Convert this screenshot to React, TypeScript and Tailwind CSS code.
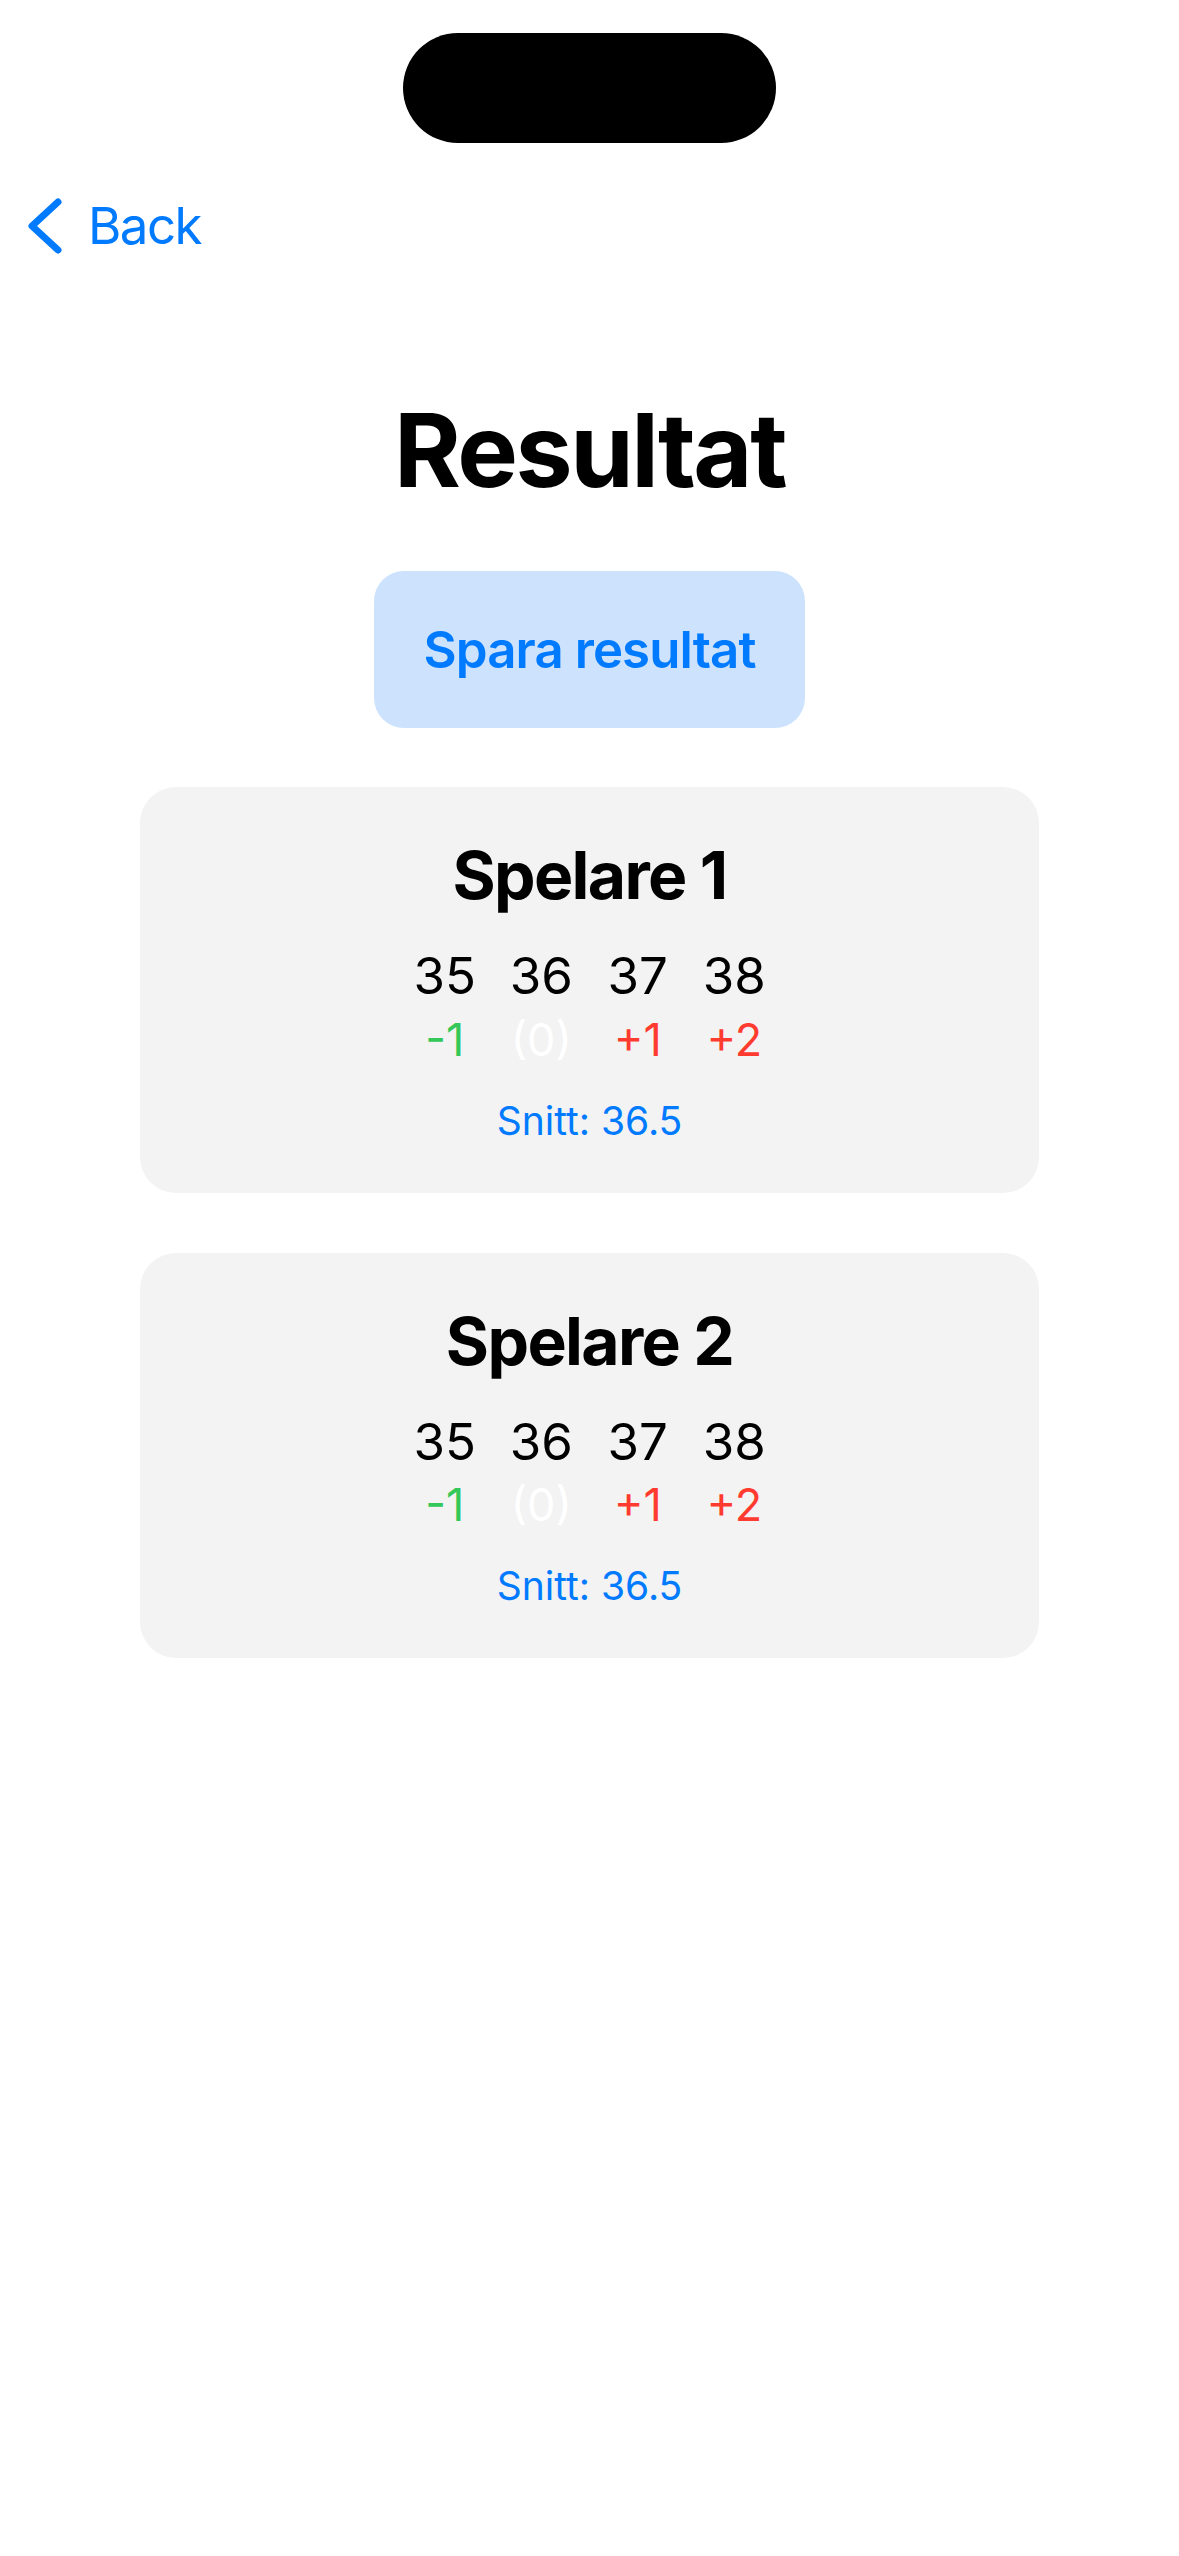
import React from 'react';

type Player = {
    name: string;
    scores: number[];
    average: string;
};

const PAR = 36;

const players: Player[] = [
    { name: 'Spelare 1', scores: [35, 36, 37, 38], average: '36.5' },
    { name: 'Spelare 2', scores: [35, 36, 37, 38], average: '36.5' },
];

function DiffLabel({ score }: { score: number }) {
    const diff = score - PAR;
    if (diff < 0) return <span className="text-[#34c759]">{diff}</span>;
    if (diff === 0) return <span className="text-white">(0)</span>;
    return <span className="text-[#ff3b30]">+{diff}</span>;
}

function PlayerCard({ player }: { player: Player }) {
    return (
        <div className="w-[899px] mx-auto bg-[#f3f3f3] rounded-[36px] pt-[48px] pb-[49px] flex flex-col items-center">
            <h2 className="text-[66px] leading-[80px] font-bold tracking-[-0.025em] text-black">{player.name}</h2>

            <div className="mt-[30px] flex">
                {player.scores.map((s, i) => (
                    <div key={i} className="w-[96.5px] flex flex-col items-center">
                        <span className="text-[51px] leading-[61px] text-black">{s}</span>
                        <span className="mt-[6.5px] text-[45px] leading-[54px]">
                            <DiffLabel score={s} />
                        </span>
                    </div>
                ))}
            </div>

            <p className="mt-[30px] text-[39px] leading-[47px] text-[#007aff]">Snitt: {player.average}</p>
        </div>
    );
}

export default function App() {
    return (
        <div className="min-h-[2556px] w-full bg-white font-['Inter',sans-serif]">
            {/* Dynamic island */}
            <div className="pt-[33px] flex justify-center">
                <div className="w-[373px] h-[110px] bg-black rounded-[55px]" />
            </div>

            {/* Nav bar */}
            <div className="mt-[52px] h-[61px] flex items-center pl-[26px]">
                <button className="flex items-center text-[#007aff]">
                    <svg className="w-[38px] h-[60px]" viewBox="0 0 38 60" fill="none" stroke="currentColor">
                        <path d="M32 6 L6 30 L32 54" strokeWidth="7" strokeLinecap="round" strokeLinejoin="round" />
                    </svg>
                    <span className="ml-[24px] text-[51px] leading-[61px] tracking-[-0.03em]">Back</span>
                </button>
            </div>

            <h1 className="mt-[143px] text-center text-[102px] leading-[102px] font-bold tracking-[-0.024em] text-black">Resultat</h1>

            <div className="mt-[70px] flex justify-center">
                <button className="w-[431px] h-[157px] rounded-[30px] bg-[#cde3fd] text-[#007aff] text-[51px] leading-[61px] font-semibold tracking-[-0.018em]">
                    Spara resultat
                </button>
            </div>

            <div className="mt-[59px] flex flex-col gap-[60px]">
                {players.map((p) => (
                    <PlayerCard key={p.name} player={p} />
                ))}
            </div>
        </div>
    );
}
